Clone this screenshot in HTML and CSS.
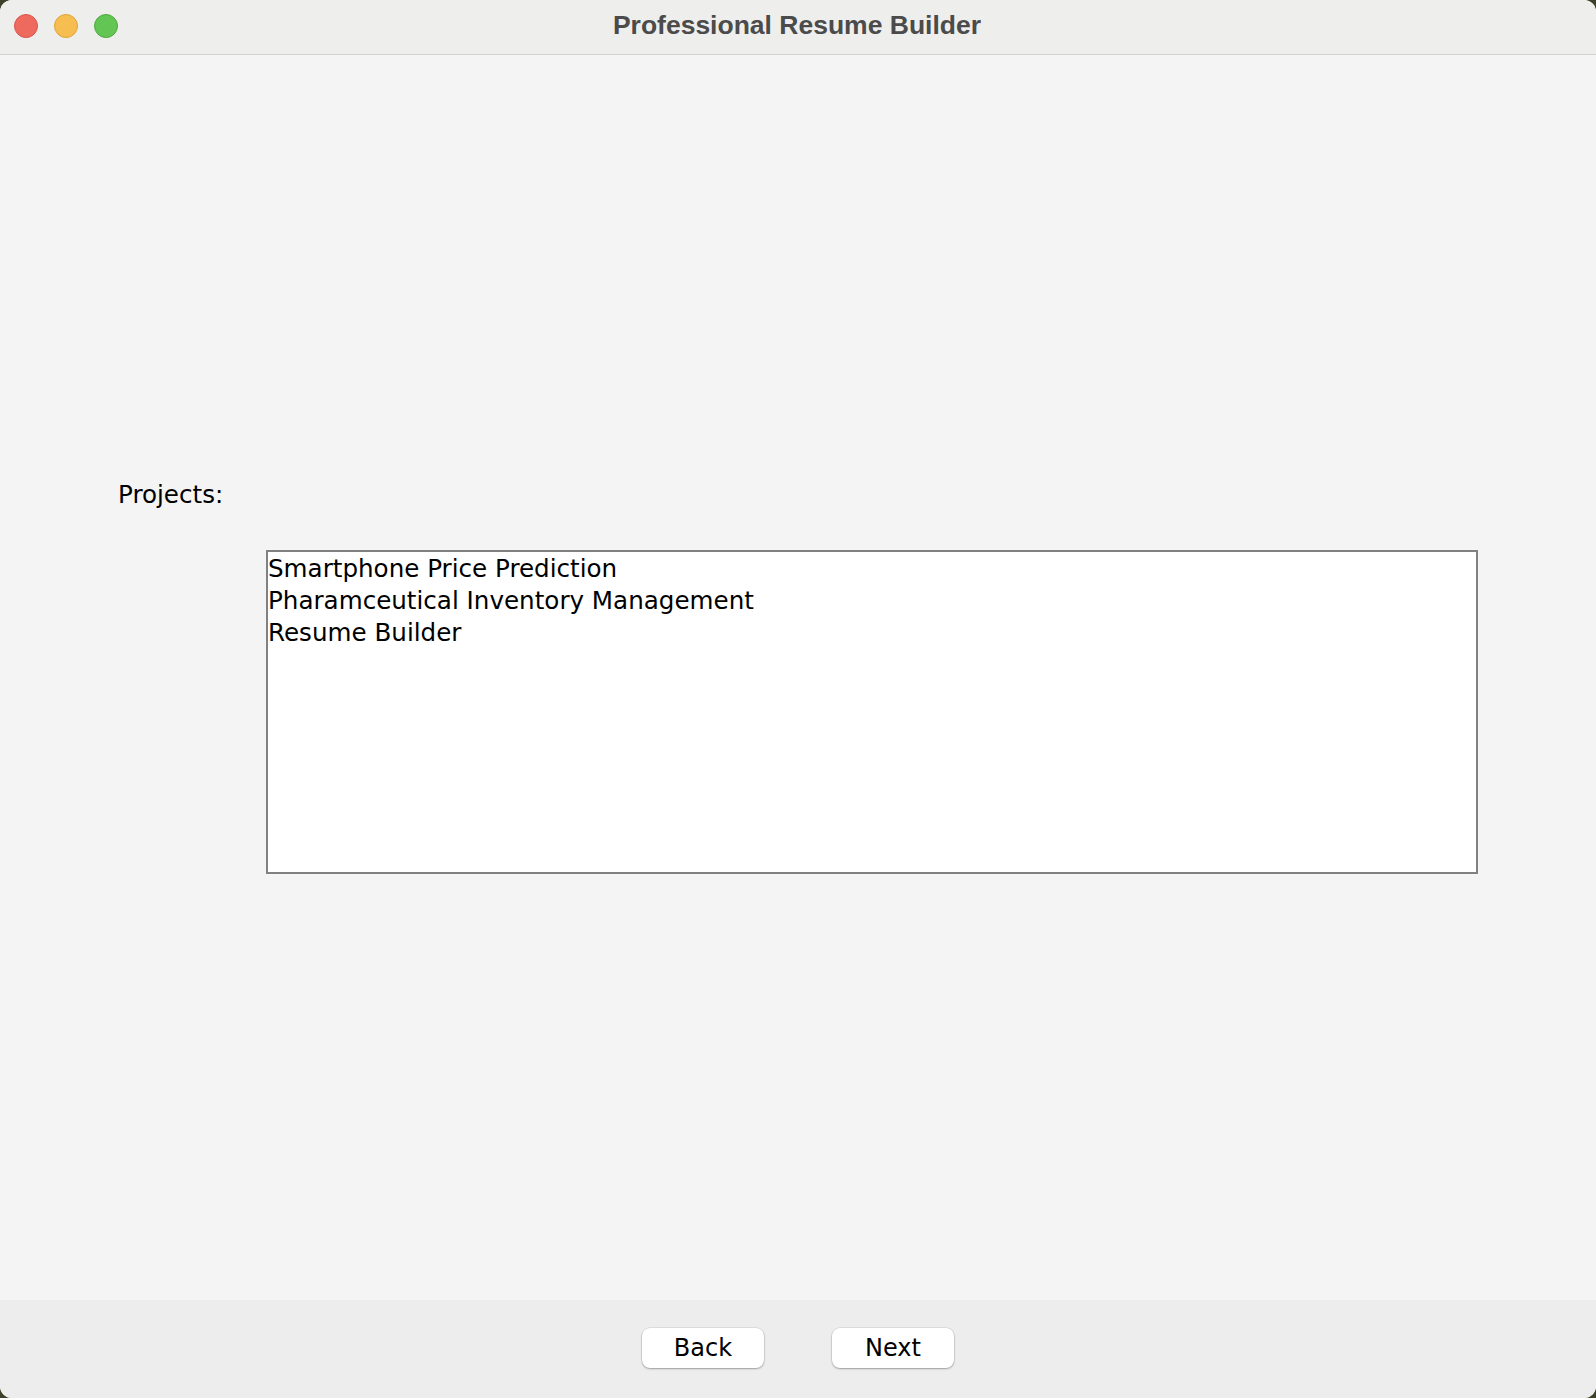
FILE: index.html
```html
<!DOCTYPE html>
<html>
<head>
<meta charset="utf-8">
<title>Professional Resume Builder</title>
<link rel="stylesheet" href="styles.css">
</head>
<body>
<div class="window">
  <header class="titlebar">
    <div class="lights">
      <span class="light red"></span>
      <span class="light yellow"></span>
      <span class="light green"></span>
    </div>
    <div class="title">Professional Resume Builder</div>
  </header>
  <main class="content">
    <div class="label">Projects:</div>
    <div class="listbox">
      <div class="item">Smartphone Price Prediction</div>
      <div class="item">Pharamceutical Inventory Management</div>
      <div class="item">Resume Builder</div>
    </div>
  </main>
  <footer class="buttonbar">
    <button class="btn">Back</button>
    <button class="btn">Next</button>
  </footer>
</div>
</body>
</html>
```

FILE: styles.css
```css
html, body {
  margin: 0;
  padding: 0;
  height: 100%;
}
body {
  background: #3c4128;
  overflow: hidden;
}
.window {
  width: 1596px;
  height: 1398px;
  display: flex;
  flex-direction: column;
  background: #f4f4f4;
  border-radius: 12px;
  overflow: hidden;
}
.titlebar {
  position: relative;
  height: 54px;
  flex: none;
  background: #eeeeed;
  border-bottom: 1px solid #d3d3d3;
  display: flex;
  align-items: center;
  justify-content: center;
}
.lights {
  position: absolute;
  left: 14px;
  top: 14px;
  display: flex;
  gap: 16px;
}
.light {
  width: 24px;
  height: 24px;
  border-radius: 50%;
  box-sizing: border-box;
}
.red { background: #ee6a5f; border: 1px solid #d9564c; }
.yellow { background: #f6be50; border: 1px solid #dfa33a; }
.green { background: #62c554; border: 1px solid #50a940; }
.title {
  font-family: "Liberation Sans", Arial, sans-serif;
  font-weight: bold;
  font-size: 26.5px;
  line-height: 30px;
  color: #4b4b4b;
  margin-top: -5px;
  margin-left: -2px;
}
.content {
  flex: 1;
  padding: 425px 0 0 118px;
  font-family: "DejaVu Sans", sans-serif;
  font-size: 24.6px;
  color: #000;
}
.label {
  line-height: 30px;
}
.listbox {
  margin: 40px 0 0 148px;
  width: 1208px;
  height: 319px;
  background: #fff;
  border: 2px solid #818181;
  padding-top: 1px;
  box-sizing: content-box;
}
.item {
  line-height: 32px;
  white-space: nowrap;
}
.buttonbar {
  flex: none;
  height: 98px;
  background: #ededed;
  display: flex;
  justify-content: center;
  align-items: flex-start;
  padding-top: 28px;
  box-sizing: border-box;
  gap: 68px;
}
.btn {
  width: 122px;
  height: 40px;
  background: #fff;
  border: none;
  border-radius: 8px;
  box-shadow: 0 0 0 0.5px rgba(0,0,0,0.12), 0 1px 2px rgba(0,0,0,0.3);
  font-family: "DejaVu Sans", sans-serif;
  font-size: 24px;
  color: #000;
  padding: 0;
}
```
